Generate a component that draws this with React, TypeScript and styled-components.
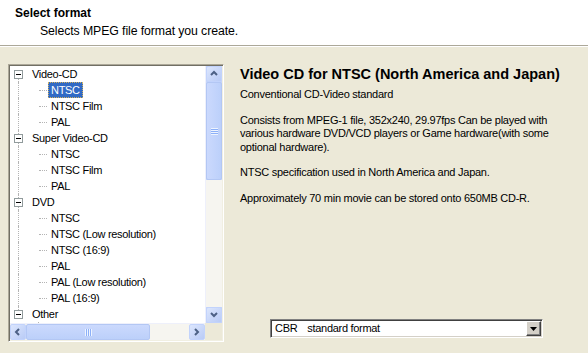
import React from "react";
import styled, { createGlobalStyle } from "styled-components";

const GlobalStyle = createGlobalStyle`
  html, body {
    margin: 0;
    padding: 0;
    background: #ece9d8;
  }
  body {
    font-family: "Liberation Sans", Arial, sans-serif;
    font-size: 11px;
    color: #000;
  }
`;

interface Node {
  label: string;
  children?: string[];
}

const tree: Node[] = [
  { label: "Video-CD", children: ["NTSC", "NTSC Film", "PAL"] },
  { label: "Super Video-CD", children: ["NTSC", "NTSC Film", "PAL"] },
  {
    label: "DVD",
    children: [
      "NTSC",
      "NTSC (Low resolution)",
      "NTSC (16:9)",
      "PAL",
      "PAL (Low resolution)",
      "PAL (16:9)",
    ],
  },
  { label: "Other", children: [] },
];

const Arrow = ({ dir }: { dir: "up" | "down" | "left" | "right" }) => {
  const pts = {
    up: "2,6 5,3 8,6",
    down: "2,3 5,6 8,3",
    left: "6,2 3,5 6,8",
    right: "3,2 6,5 3,8",
  }[dir];
  return (
    <svg width="10" height="10" viewBox="0 0 10 10">
      <polyline points={pts} fill="none" stroke="#4d6185" strokeWidth="2" />
    </svg>
  );
};

const App = () => {
  const rows: React.ReactNode[] = [];
  tree.forEach((node, ni) => {
    const lastRoot = ni === tree.length - 1;
    rows.push(
      <Row key={`r${ni}`}>
        <RootCol $first={ni === 0} $last={lastRoot}>
          <ExpandBox>
            <Minus />
          </ExpandBox>
        </RootCol>
        <Label>{node.label}</Label>
      </Row>
    );
    node.children?.forEach((child, ci) => {
      rows.push(
        <Row key={`c${ni}-${ci}`}>
          <RootCol $hidden={lastRoot} />
          <ChildCol />
          <Label $selected={ni === 0 && ci === 0}>{child}</Label>
        </Row>
      );
    });
  });

  return (
    <>
      <GlobalStyle />
      <Page>
        <Header>
          <Title>Select format</Title>
          <Subtitle>Selects MPEG file format you create.</Subtitle>
        </Header>
        <Body>
          <TreeBox>
            <TreeList>
              {rows}
              <Row>
                <RootCol $hidden />
                <ChildStub />
              </Row>
            </TreeList>
            <VScroll>
              <ScrollButton>
                <Arrow dir="up" />
              </ScrollButton>
              <VThumb>
                <Grip $vertical />
              </VThumb>
              <Track />
              <ScrollButton>
                <Arrow dir="down" />
              </ScrollButton>
            </VScroll>
            <HScroll>
              <ScrollButton>
                <Arrow dir="left" />
              </ScrollButton>
              <HThumb>
                <Grip />
              </HThumb>
              <Track />
              <ScrollButton>
                <Arrow dir="right" />
              </ScrollButton>
            </HScroll>
            <Corner />
          </TreeBox>
          <Detail>
            <DetailTitle>Video CD for NTSC (North America and Japan)</DetailTitle>
            <Para>Conventional CD-Video standard</Para>
            <Para>
              Consists from MPEG-1 file, 352x240, 29.97fps Can be played with
              various hardware DVD/VCD players or Game hardware(with some
              optional hardware).
            </Para>
            <Para>NTSC specification used in North America and Japan.</Para>
            <Para>Approximately 70 min movie can be stored onto 650MB CD-R.</Para>
            <Spacer />
            <Combo>
              <ComboText>
                <span>CBR</span>
                <span>standard format</span>
              </ComboText>
              <ComboButton>
                <svg width="7" height="4" viewBox="0 0 7 4">
                  <polygon points="0,0 7,0 3.5,4" fill="#000" />
                </svg>
              </ComboButton>
            </Combo>
          </Detail>
        </Body>
      </Page>
    </>
  );
};

const Page = styled.div`
  display: flex;
  flex-direction: column;
  width: 588px;
  height: 353px;
  overflow: hidden;
`;

const Header = styled.div`
  flex: none;
  height: 46px;
  background: #fff;
  border-bottom: 1px solid #aca899;
  box-shadow: 0 1px 0 #fff;
  padding: 6px 0 0 15px;
  box-sizing: border-box;
`;

const Title = styled.div`
  font-weight: bold;
  font-size: 12px;
  line-height: 14px;
`;

const Subtitle = styled.div`
  margin: 4px 0 0 25px;
  font-size: 12.3px;
  line-height: 14px;
  letter-spacing: -0.1px;
`;

const Body = styled.div`
  flex: 1;
  display: flex;
  padding: 18px 0 10px 8px;
  box-sizing: border-box;
`;

const TreeBox = styled.div`
  width: 216px;
  height: 278px;
  box-sizing: border-box;
  border: 1px solid;
  border-color: #aca899 #fff #fff #aca899;
  box-shadow: inset 1px 1px 0 #716f64, inset -1px -1px 0 #f1efe2;
  padding: 1px;
  display: grid;
  grid-template-columns: 1fr 17px;
  grid-template-rows: 1fr 17px;
  background: #fff;
`;

const TreeList = styled.div`
  overflow: hidden;
  background: #fff;
`;

const Row = styled.div`
  display: flex;
  align-items: center;
  height: 16px;
`;

const RootCol = styled.div<{ $first?: boolean; $last?: boolean; $hidden?: boolean }>`
  position: relative;
  width: 19px;
  height: 16px;
  flex: none;
  &::before {
    content: "";
    display: ${(p) => (p.$hidden ? "none" : "block")};
    position: absolute;
    left: 8px;
    top: ${(p) => (p.$first ? "8px" : "0")};
    bottom: ${(p) => (p.$last ? "8px" : "0")};
    border-left: 1px dotted #b4b4b4;
  }
`;

const ExpandBox = styled.div`
  position: absolute;
  left: 4px;
  top: 4px;
  width: 7px;
  height: 7px;
  border: 1px solid #919b9c;
  background: #fff;
  display: flex;
  align-items: center;
  justify-content: center;
  z-index: 1;
`;

const Minus = styled.div`
  width: 5px;
  height: 1px;
  background: #000;
`;

const ChildCol = styled.div`
  position: relative;
  width: 19px;
  height: 16px;
  flex: none;
  &::before {
    content: "";
    position: absolute;
    left: 10px;
    right: 1px;
    top: 8px;
    border-top: 1px dotted #b4b4b4;
  }
`;

const ChildStub = styled.div`
  position: relative;
  width: 19px;
  height: 16px;
  &::before {
    content: "";
    position: absolute;
    left: 9px;
    top: 0;
    height: 4px;
    border-left: 1px dotted #b4b4b4;
  }
`;

const Label = styled.span<{ $selected?: boolean }>`
  padding: 0 2px;
  line-height: 14px;
  white-space: nowrap;
  letter-spacing: -0.3px;
  border: 1px ${(p) => (p.$selected ? "dotted #d0b060" : "solid transparent")};
  background: ${(p) => (p.$selected ? "#316ac5" : "transparent")};
  color: ${(p) => (p.$selected ? "#fff" : "#000")};
`;

const VScroll = styled.div`
  display: flex;
  flex-direction: column;
  background: #c8d6fa;
  border-left: 1px solid #eef0fb;
`;

const HScroll = styled.div`
  display: flex;
  background: #f4f3ee;
  border-top: 1px solid #eef0fb;
`;

const ScrollButton = styled.div`
  width: 16px;
  height: 16px;
  flex: none;
  box-sizing: border-box;
  border: 1px solid #c2d3fc;
  border-radius: 2px;
  background: linear-gradient(135deg, #dce6fd, #b9cbf6);
  display: flex;
  align-items: center;
  justify-content: center;
`;

const VThumb = styled.div`
  height: 98px;
  flex: none;
  box-sizing: border-box;
  border: 1px solid #b3c7f4;
  border-radius: 2px;
  background: linear-gradient(90deg, #cbd9fd, #bcd0fa);
  display: flex;
  align-items: center;
  justify-content: center;
`;

const HThumb = styled.div`
  width: 124px;
  flex: none;
  box-sizing: border-box;
  border: 1px solid #b3c7f4;
  border-radius: 2px;
  background: linear-gradient(180deg, #cbd9fd, #bcd0fa);
  display: flex;
  align-items: center;
  justify-content: center;
`;

const Grip = styled.div<{ $vertical?: boolean }>`
  width: 7px;
  height: 7px;
  background: ${(p) =>
    p.$vertical
      ? "repeating-linear-gradient(180deg, #eef4fe 0 1px, #8cb0f8 1px 2px)"
      : "repeating-linear-gradient(90deg, #eef4fe 0 1px, #8cb0f8 1px 2px)"};
`;

const Track = styled.div`
  flex: 1;
  background: #f6f5f0;
`;

const Corner = styled.div`
  background: #ece9d8;
`;

const Detail = styled.div`
  flex: 1;
  display: flex;
  flex-direction: column;
  padding: 1px 20px 0 16px;
`;

const DetailTitle = styled.div`
  font-size: 14.5px;
  font-weight: bold;
  line-height: 18px;
  margin-bottom: 5px;
`;

const Para = styled.p`
  margin: 0 0 12px;
  line-height: 13.5px;
  letter-spacing: -0.25px;
`;

const Spacer = styled.div`
  flex: 1;
`;

const Combo = styled.div`
  margin: 0 0 5px 30px;
  width: 273px;
  height: 19px;
  flex: none;
  box-sizing: border-box;
  border: 1px solid;
  border-color: #808080 #fff #fff #808080;
  box-shadow: inset 1px 1px 0 #404040, inset -1px -1px 0 #d4d0c8;
  background: #fff;
  display: flex;
  align-items: center;
  padding: 1px;
`;

const ComboText = styled.div`
  flex: 1;
  display: flex;
  gap: 10px;
  padding-left: 3px;
  line-height: 15px;
  letter-spacing: -0.3px;
`;

const ComboButton = styled.div`
  width: 15px;
  height: 15px;
  box-sizing: border-box;
  border: 1px solid;
  border-color: #fff #404040 #404040 #fff;
  box-shadow: inset -1px -1px 0 #808080;
  background: #d4d0c8;
  display: flex;
  align-items: center;
  justify-content: center;
`;

export default App;
